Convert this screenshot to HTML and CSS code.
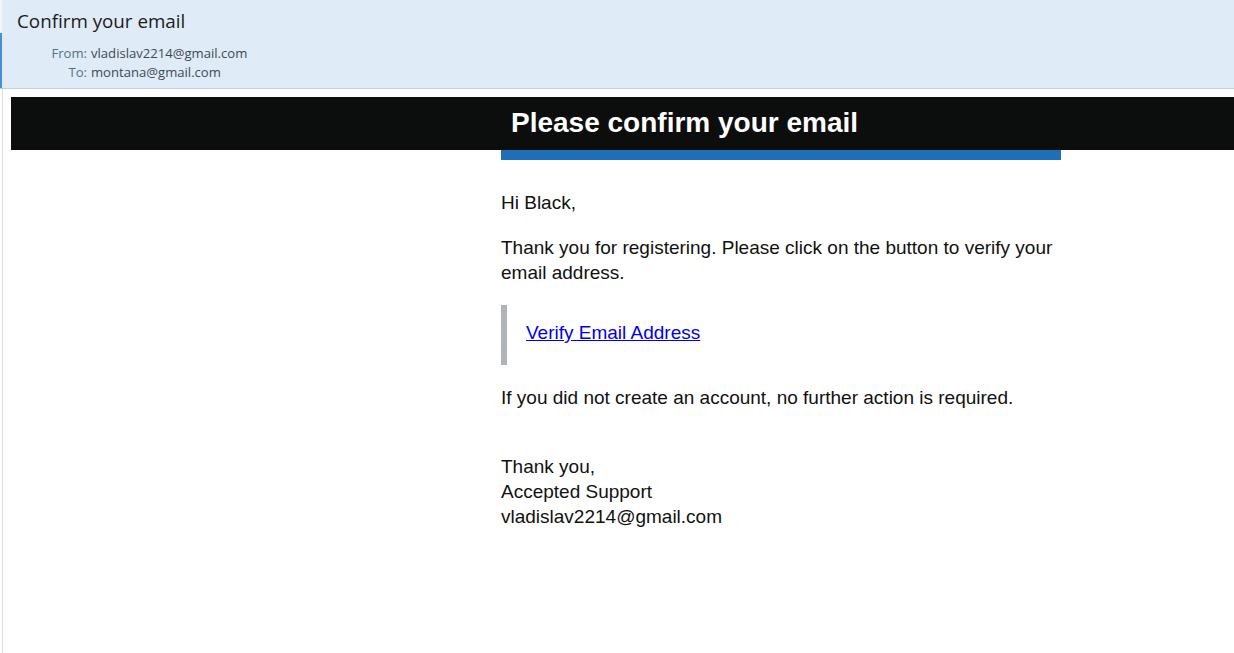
FILE: index.html
```html
<!DOCTYPE html>
<html lang="en">
<head>
<meta charset="utf-8">
<title>Confirm your email</title>
<link rel="stylesheet" href="styles.css">
</head>
<body>
<header class="mail-head">
  <div class="subject">Confirm your email</div>
  <div class="meta">
    <div class="meta-row"><span class="label">From:</span><span class="value">vladislav2214@gmail.com</span></div>
    <div class="meta-row"><span class="label">To:</span><span class="value">montana@gmail.com</span></div>
  </div>
</header>
<main class="mail-body">
  <div class="banner">
    <h1 class="banner-title">Please confirm your email</h1>
  </div>
  <div class="content">
    <div class="accent"></div>
    <p class="para first">Hi Black,</p>
    <p class="para">Thank you for registering. Please click on the button to verify your email address.</p>
    <div class="cta"><a class="cta-link" href="#">Verify Email Address</a></div>
    <p class="para">If you did not create an account, no further action is required.</p>
    <p class="para sign">Thank you,<br>Accepted Support<br>vladislav2214@gmail.com</p>
  </div>
</main>
</body>
</html>
```

FILE: styles.css
```css
html, body {
  margin: 0;
  padding: 0;
  background: #ffffff;
  height: 100%;
}
body {
  display: flex;
  flex-direction: column;
  overflow: hidden;
}
.mail-head {
  background: #dfebf6;
  border-bottom: 1px solid #b8d2ea;
  height: 89px;
  flex: none;
  box-sizing: border-box;
  display: flex;
  flex-direction: column;
  font-family: "Open Sans", "Noto Sans", sans-serif;
}
.subject {
  height: 33px;
  box-sizing: border-box;
  padding: 8px 0 0 15px;
  border-left: 2px solid #f2f5f8;
  font-size: 18.8px;
  line-height: 26px;
  color: #1b1b1b;
}
.meta {
  flex: 1;
  border-left: 2px solid #4a8fd0;
  padding-top: 11px;
}
.meta-row {
  display: flex;
  font-size: 13.1px;
  line-height: 19px;
  color: #3d4955;
}
.label {
  width: 89px;
  text-align: right;
  padding-right: 4px;
  box-sizing: border-box;
  color: #57708a;
}
.value {
  color: #3e4a57;
}
.mail-body {
  flex: 1;
  margin-left: 2px;
  border-left: 1px solid #dedede;
  padding: 8px 0 0 8px;
  font-family: "Liberation Sans", Arial, sans-serif;
}
.banner {
  background: #0c0e0d;
  height: 53px;
  padding-left: 490px;
  box-sizing: border-box;
}
.banner-title {
  margin: 0;
  padding: 9px 10px 0;
  font-size: 28px;
  line-height: 33px;
  font-weight: bold;
  color: #ffffff;
}
.content {
  margin-left: 490px;
  width: 560px;
}
.accent {
  height: 10px;
  background: #1f6fb8;
}
.para {
  margin: 20px 0 0;
  font-size: 19px;
  line-height: 25px;
  color: #111111;
}
.para.first {
  margin-top: 30px;
}
.para.sign {
  margin-top: 44px;
}
.cta {
  margin-top: 20px;
  border-left: 6px solid #b1b4b7;
  padding: 15px 19px 20px;
  font-size: 19px;
  line-height: 25px;
}
.cta + .para {
  margin-top: 20px;
}
.cta-link {
  color: #0000ee;
  text-decoration: underline;
}
```
